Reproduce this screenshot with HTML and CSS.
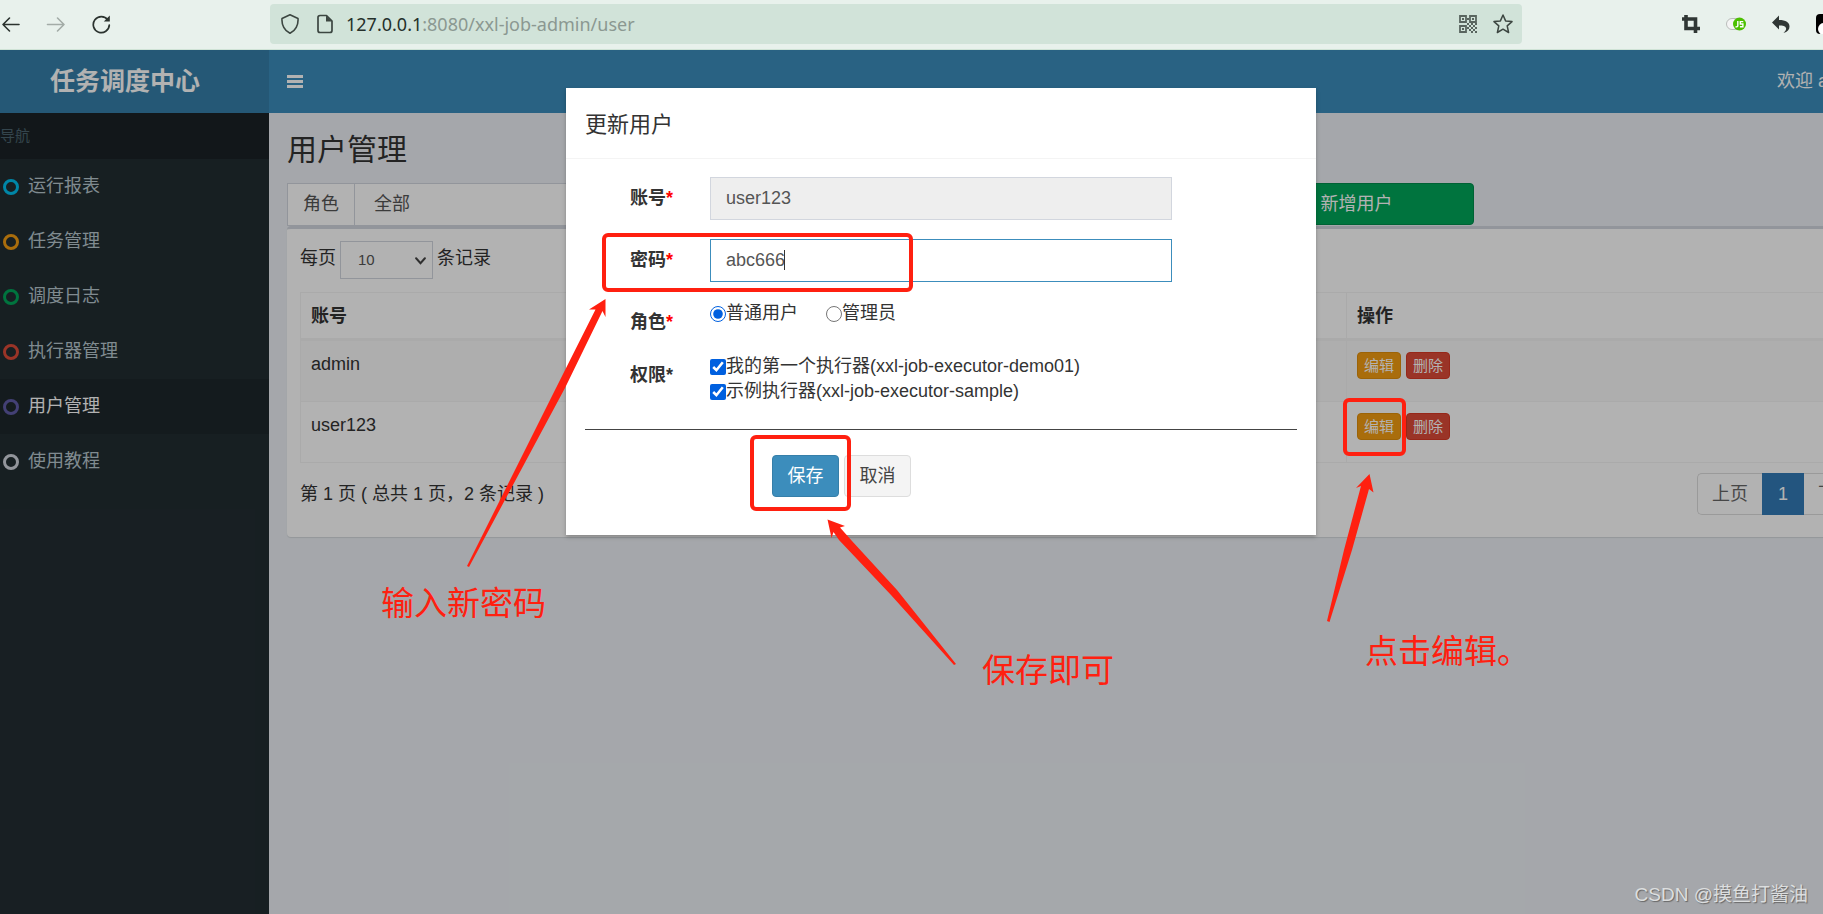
FILE: index.html
```html
<!DOCTYPE html>
<html lang="zh-CN">
<head>
<meta charset="utf-8">
<title>任务调度中心</title>
<link rel="stylesheet" href="styles.css">
</head>
<body>
<header class="browser">
  <div class="browser-nav">
    <button class="icon-btn" aria-label="后退"><svg viewBox="0 0 20 20"><path d="M18 10.500H2M8.500 4 2 10.500 8.500 17" fill="none" stroke="#2b332f" stroke-width="1.600" stroke-linecap="round" stroke-linejoin="round"/></svg></button>
    <button class="icon-btn" aria-label="前进"><svg viewBox="0 0 20 20"><path d="M1.500 10.500H18M11.500 4 18 10.500 11.500 17" fill="none" stroke="#a3aca7" stroke-width="1.600" stroke-linecap="round" stroke-linejoin="round"/></svg></button>
    <button class="icon-btn" aria-label="刷新"><svg viewBox="0 0 20 20"><path d="M16.800 6A8 8 0 1 0 18.300 11" fill="none" stroke="#2b332f" stroke-width="1.700" stroke-linecap="round"/><path d="M18.800 1.500V7.500H12.800Z" fill="#2b332f"/></svg></button>
  </div>
  <div class="address">
    <svg class="icon" viewBox="0 0 20 20"><path d="M10 .8 18 4.500C18.500 11 15.500 17 10 19.300 4.500 17 1.500 11 2 4.500Z" fill="none" stroke="#3c4641" stroke-width="1.600" stroke-linejoin="round"/></svg>
    <svg class="icon" viewBox="0 0 20 20"><path d="M5 1.500h6.500L17 7v9.500a2 2 0 0 1-2 2H5a2 2 0 0 1-2-2v-13a2 2 0 0 1 2-2Z" fill="none" stroke="#3c4641" stroke-width="1.700" stroke-linejoin="round"/><path d="M11 1.500V7.500H17Z" fill="#3c4641"/></svg>
    <span class="url"><b>127.0.0.1</b>:8080/xxl-job-admin/user</span>
    <svg class="icon" viewBox="0 0 20 20" fill="none" stroke="#59655f" stroke-width="1.800"><path d="M2 2h6v6H2ZM12 2h6v6h-6ZM2 12h6v6H2Z"/><g fill="#59655f" stroke="none"><path d="M4 4h2v2H4ZM14 4h2v2h-2ZM4 14h2v2H4ZM9 4h2v2H9ZM9 9h2v2H9ZM11 11h2v2h-2ZM13 9h2v2h-2ZM15 11h2v2h-2ZM17 9h2v2h-2ZM13 13h2v2h-2ZM11 15h2v2h-2ZM15 15h2v2h-2ZM17 13h2v2h-2ZM13 17h2v2h-2ZM17 17h2v2h-2ZM9 13h2v2H9Z"/></g></svg>
    <svg class="icon" viewBox="0 0 20 20"><path d="M10 1 12.600 6.900 19 7.600 14.200 11.900 15.600 18.500 10 15.200 4.400 18.500 5.800 11.900 1 7.600 7.400 6.900Z" fill="none" stroke="#3c4641" stroke-width="1.500" stroke-linejoin="round"/></svg>
  </div>
  <div class="browser-tools">
    <svg class="icon" viewBox="0 0 20 20"><path d="M5 1v13.500h14M1 5h13.500v14" fill="none" stroke="#303735" stroke-width="3.600"/></svg>
    <svg class="icon" viewBox="0 0 20 20"><rect x=".5" y="4.500" width="16" height="11" rx="5.500" fill="#f4f4f4" stroke="#b9bcba"/><circle cx="13.500" cy="10" r="6.500" fill="#4cc000"/><path d="M11.800 7v4.800q0 1.200-2.300 1M17.300 7.600h-3v2.400h2.600v2.800h-3" fill="none" stroke="#fff" stroke-width="1.400"/></svg>
    <svg class="icon" viewBox="0 0 20 20"><path d="M8 1.500V6C15 6 18.500 8.500 18.500 12.500 18.500 15.500 16.500 18 12.500 19 14.500 17 15.500 15.500 15 14 14.500 12 12 11.500 8 11.500V15.500L1 8.500Z" fill="#303735"/></svg>
    <svg class="icon" viewBox="0 0 20 20"><rect y="0" width="20" height="20" rx="4" fill="#000"/><circle cx="8" cy="15" r="6" fill="#fff"/></svg>
  </div>
</header>

<div class="viewport">
<div class="app">
  <header class="topbar">
    <a class="logo" href="#">任务调度中心</a>
    <nav class="navbar">
      <button class="toggle" aria-label="切换菜单"><span></span><span></span><span></span></button>
      <a class="welcome" href="#">欢迎 admin<span class="caret-down"></span></a>
    </nav>
  </header>
  <div class="main">
    <aside class="sidebar">
      <div class="side-title">导航</div>
      <a class="side-link" href="#"><i class="ring aqua"></i>运行报表</a>
      <a class="side-link" href="#"><i class="ring yellow"></i>任务管理</a>
      <a class="side-link" href="#"><i class="ring green"></i>调度日志</a>
      <a class="side-link" href="#"><i class="ring red"></i>执行器管理</a>
      <a class="side-link active" href="#"><i class="ring purple"></i>用户管理</a>
      <a class="side-link" href="#"><i class="ring gray"></i>使用教程</a>
    </aside>
    <section class="content">
      <h1>用户管理</h1>
      <div class="filters">
        <div class="group">
          <label class="addon" for="role">角色</label>
          <select id="role" class="group-select"><option>全部</option></select>
        </div>
        <button class="btn add">新增用户</button>
      </div>
      <div class="box">
        <div class="length">
          <label for="len">每页</label>
          <span class="select-wrap">
            <select id="len"><option>10</option></select>
            <svg class="chevron" viewBox="0 0 10 7"><path d="M1 1 5 5.500 9 1" fill="none" stroke="#444" stroke-width="1.800" stroke-linecap="round"/></svg>
          </span>
          <span>条记录</span>
        </div>
        <table>
          <thead><tr><th class="col-name">账号</th><th>操作</th></tr></thead>
          <tbody>
            <tr class="odd"><td>admin</td><td><div class="ops"><button class="btn-xs warn">编辑</button><button class="btn-xs danger">删除</button></div></td></tr>
            <tr><td>user123</td><td><div class="ops"><button class="btn-xs warn">编辑</button><button class="btn-xs danger">删除</button></div></td></tr>
          </tbody>
        </table>
        <div class="foot">
          <div>第 1 页 ( 总共 1 页，2 条记录 )</div>
          <nav class="pages"><a href="#">上页</a><a class="current" href="#">1</a><a href="#">下页</a></nav>
        </div>
      </div>
    </section>
  </div>

  <div class="backdrop">
    <div class="modal" role="dialog" aria-labelledby="mt">
      <h4 id="mt">更新用户</h4>
      <form class="modal-body">
        <div class="row"><label class="name" for="acc">账号<em>*</em></label><input class="field" id="acc" type="text" value="user123" readonly></div>
        <div class="row"><label class="name" for="pwd">密码<em>*</em></label><div class="field-wrap"><input class="field focus" id="pwd" type="text" value="abc666"><span class="cursor"></span></div></div>
        <div class="row"><span class="name">角色<em>*</em></span>
          <div class="radios"><label class="opt"><input type="radio" name="r" checked>普通用户</label><label class="opt"><input type="radio" name="r">管理员</label></div></div>
        <div class="row last"><span class="name">权限*</span>
          <div><label class="opt"><input type="checkbox" checked>我的第一个执行器(xxl-job-executor-demo01)</label><label class="opt"><input type="checkbox" checked>示例执行器(xxl-job-executor-sample)</label></div></div>
        <hr>
        <div class="actions"><button type="button" class="btn primary">保存</button><button type="button" class="btn default">取消</button></div>
      </form>
    </div>
  </div>
</div>
</div>

<div class="notes">
  <svg class="arrows" width="1823" height="914" viewBox="0 0 1823 914" fill="#ff2010">
    <path d="M605.500 299 589 309.500 595.500 309.500 556 388 467 566 469 567 565 388 602.500 311 605.500 317Z"/>
    <path d="M827.500 519.500 845 526 840 527.500 852 541 897 590 956 664 954 665 891 595 839 540 833.500 532 831.500 538Z"/>
    <path d="M1369.500 474 1356 488 1361 486 1344 550 1327 621 1329.500 622 1352 550 1369 489 1373.500 492.500Z"/>
  </svg>
  <div class="frame frame-pwd"></div>
  <div class="frame frame-save"></div>
  <div class="frame frame-edit"></div>
  <div class="note note-pwd">输入新密码</div>
  <div class="note note-save">保存即可</div>
  <div class="note note-edit">点击编辑。</div>
  <div class="watermark">CSDN @摸鱼打酱油</div>
</div>
</body>
</html>
```

FILE: styles.css
```css
* { box-sizing: border-box; }
body {
  margin: 0;
  height: 100vh;
  display: flex;
  flex-direction: column;
  position: relative;
  overflow: hidden;
  font: 18px/25px "Liberation Sans", "Noto Sans CJK SC", sans-serif;
  color: #333;
}
a { text-decoration: none; color: inherit; }
button, input, select { font: inherit; color: inherit; margin: 0; }
button { cursor: pointer; }

/* browser toolbar */
.browser {
  display: flex;
  flex: none;
  height: 50px;
  padding: 4px 0 5px;
  background: #e8f1ec;
  border-bottom: 1px solid #cfe3d6;
}
.browser-nav { display: flex; align-items: center; gap: 25px; width: 270px; padding-left: 1px; }
.icon-btn { width: 20px; height: 20px; padding: 0; border: 0; background: none; }
.icon-btn svg { display: block; width: 20px; height: 20px; }
.icon { width: 20px; height: 20px; flex: none; }
.address {
  flex: 1;
  display: flex;
  align-items: center;
  gap: 15px;
  padding: 0 9px 0 10px;
  border-radius: 4px;
  background: #d1e3d9;
}
.url { flex: 1; margin-left: -4px; font-family: "Noto Sans", sans-serif; font-size: 18px; color: #8b9891; }
.url b { font-weight: 400; color: #25302b; }
.browser-tools { display: flex; align-items: center; gap: 25px; width: 301px; padding-left: 159px; overflow: hidden; }

/* application shell, wider than the window on both sides */
.viewport { flex: 1; overflow: hidden; }
.app {
  position: relative;
  display: flex;
  flex-direction: column;
  width: calc(100% + 97px);
  height: 100%;
  margin-left: -19px;
}
.topbar { display: flex; height: 63px; color: #fff; }
.logo {
  width: 288px;
  background: #367fa9;
  font-size: 25px;
  font-weight: 700;
  line-height: 63px;
  text-align: center;
}
.navbar { flex: 1; display: flex; align-items: center; justify-content: space-between; padding: 0 19px 0 18px; background: #3c8dbc; }
.toggle { display: flex; flex-direction: column; gap: 2px; width: 16px; padding: 0; border: 0; background: none; }
.toggle span { height: 3px; background: #fff; }
.welcome { display: flex; align-items: center; gap: 5px; }
.caret-down { border: 5px solid transparent; border-top-color: #fff; border-bottom: 0; }

.main { flex: 1; display: flex; background: #ecf0f5; }
.sidebar { width: 288px; background: #222d32; color: #b8c7ce; }
.side-title { padding: 0 19px; line-height: 46px; font-size: 15px; color: #4b646f; background: #1a2226; }
.side-link { display: flex; align-items: center; gap: 9px; height: 55px; padding-left: 22px; }
.side-link.active { background: #1e282c; color: #fff; }
.ring { width: 16px; height: 16px; border: 3px solid; border-radius: 50%; }
.aqua { color: #00c0ef; }
.yellow { color: #f39c12; }
.green { color: #00a65a; }
.red { color: #dd4b39; }
.purple { color: #605ca8; }
.gray { color: #d2d6de; }

.content { flex: 1; padding: 19px 19px 0 18px; }
h1 { margin: 0 0 15px; font-size: 30px; line-height: 36px; font-weight: 400; }
.filters { display: grid; grid-template-columns: repeat(12, 1fr); column-gap: 37px; }
.group { grid-column: 1 / 4; display: flex; height: 43px; color: #555; }
.addon { width: 67px; line-height: 41px; text-align: center; background: #fff; border: 1px solid #d2d6de; border-right: 0; }
.group-select { flex: 1; appearance: none; padding: 0 19px; border: 1px solid #d2d6de; border-radius: 0; background: #fff; }
.btn { min-width: 67px; height: 42px; padding: 0 14px; border: 1px solid; border-radius: 4px; }
.add { grid-column: 8 / 10; color: #fff; background: #00a65a; border-color: #008d4c; }

.box { padding: 12px 13px 22px; border-top: 3px solid #d2d6de; border-radius: 4px; background: #fff; box-shadow: 0 1px 1px rgba(0, 0, 0, .1); }
.length { display: flex; gap: 4px; line-height: 34px; margin-bottom: 13px; }
.select-wrap { position: relative; width: 93px; height: 38px; }
.select-wrap select { width: 100%; height: 100%; padding: 0 17px; appearance: none; border: 1px solid #d2d6de; border-radius: 0; background: #fff; font-size: 15px; color: #555; }
.chevron { position: absolute; right: 7px; top: 16px; width: 11px; height: 8px; }
table { width: 100%; table-layout: fixed; border-collapse: separate; border-spacing: 0; border: 1px solid #f4f4f4; border-right: 0; border-bottom: 0; }
th, td { padding: 11px 10px 9px; text-align: left; vertical-align: top; }
th + th, td + td { border-left: 1px solid #f4f4f4; }
th { border-bottom: 3px solid #f4f4f4; }
td { height: 61px; border-bottom: 1px solid #f4f4f4; }
.odd td { background: #f9f9f9; }
.col-name { width: 1045px; }
.ops { display: flex; gap: 5px; }
.btn-xs { width: 44px; height: 27px; padding: 0; border: 1px solid; border-radius: 4px; color: #fff; font-size: 15px; line-height: 24px; }
.warn { background: #f39c12; border-color: #e08e0b; }
.danger { background: #dd4b39; border-color: #d73925; }
.foot { display: flex; justify-content: space-between; align-items: center; margin-top: 10px; }
.pages { display: flex; color: #666; }
.pages a { padding: 8px 14px; line-height: 24px; border: 1px solid #ddd; border-right: 0; background: #fff; }
.pages a:first-child { border-radius: 5px 0 0 5px; }
.pages a:last-child { border-right: 1px solid #ddd; border-left: 0; border-radius: 0 5px 5px 0; }
.pages .current { padding: 8px 16px; border: 0; line-height: 26px; background: #337ab7; color: #fff; }

/* dialog */
.backdrop { position: absolute; inset: 0; padding-top: 38px; background: rgba(0, 0, 0, .3); }
.modal { width: 750px; margin: 0 auto; background: #fff; box-shadow: 0 2px 4px rgba(0, 0, 0, .25); }
h4 { margin: 0; padding: 20px 19px 17px; border-bottom: 1px solid #f4f4f4; font-size: 22px; line-height: 33px; font-weight: 400; }
.modal-body { padding: 18px 19px 19px; }
.row { display: grid; grid-template-columns: 88px 1fr; column-gap: 37px; margin-bottom: 19px; padding-right: 125px; }
.row.last { margin-bottom: 25px; }
.name { padding-top: 9px; text-align: right; font-weight: 700; white-space: nowrap; }
.name em { font-style: normal; color: #f00; }
.field { display: block; width: 100%; height: 43px; padding: 0 15px; border: 1px solid #d2d6de; border-radius: 0; outline: 0; color: #555; background: #fff; }
.field[readonly] { background: #eee; }
.field.focus { border-color: #3c8dbc; }
.field-wrap { position: relative; }
.cursor { position: absolute; left: 74px; top: 11px; width: 1px; height: 20px; background: #333; }
.radios { display: flex; gap: 28px; }
.opt { display: flex; align-items: center; height: 25px; white-space: nowrap; }
.opt input { flex: none; width: 16px; height: 16px; accent-color: #0060df; }
hr { margin: 0 0 25px; border: 0; height: 1px; background: #444; }
.actions { display: flex; gap: 5px; margin: 0 0 19px 187px; }
.primary { color: #fff; background: #3c8dbc; border-color: #367fa9; }
.default { color: #444; background: #f4f4f4; border-color: #ddd; }

/* annotations drawn over the page */
.notes { position: absolute; inset: 0; overflow: hidden; pointer-events: none; }
.arrows { position: absolute; left: 0; top: 0; }
.frame { position: absolute; border: 4px solid #ff2010; border-radius: 6px; }
.frame-pwd { left: 602px; top: 233px; width: 311px; height: 59px; }
.frame-save { left: 750px; top: 435px; width: 101px; height: 76px; }
.frame-edit { left: 1343px; top: 398px; width: 63px; height: 58px; }
.note { position: absolute; font-size: 33px; line-height: 40px; color: #ff2010; white-space: nowrap; }
.note-pwd { left: 381px; top: 584px; }
.note-save { left: 982px; top: 651px; }
.note-edit { left: 1365px; top: 632px; }
.watermark { position: absolute; right: 15px; bottom: 7px; font-size: 19px; color: #dcdedf; text-shadow: 1px 1px 1px #666; white-space: nowrap; }
```
